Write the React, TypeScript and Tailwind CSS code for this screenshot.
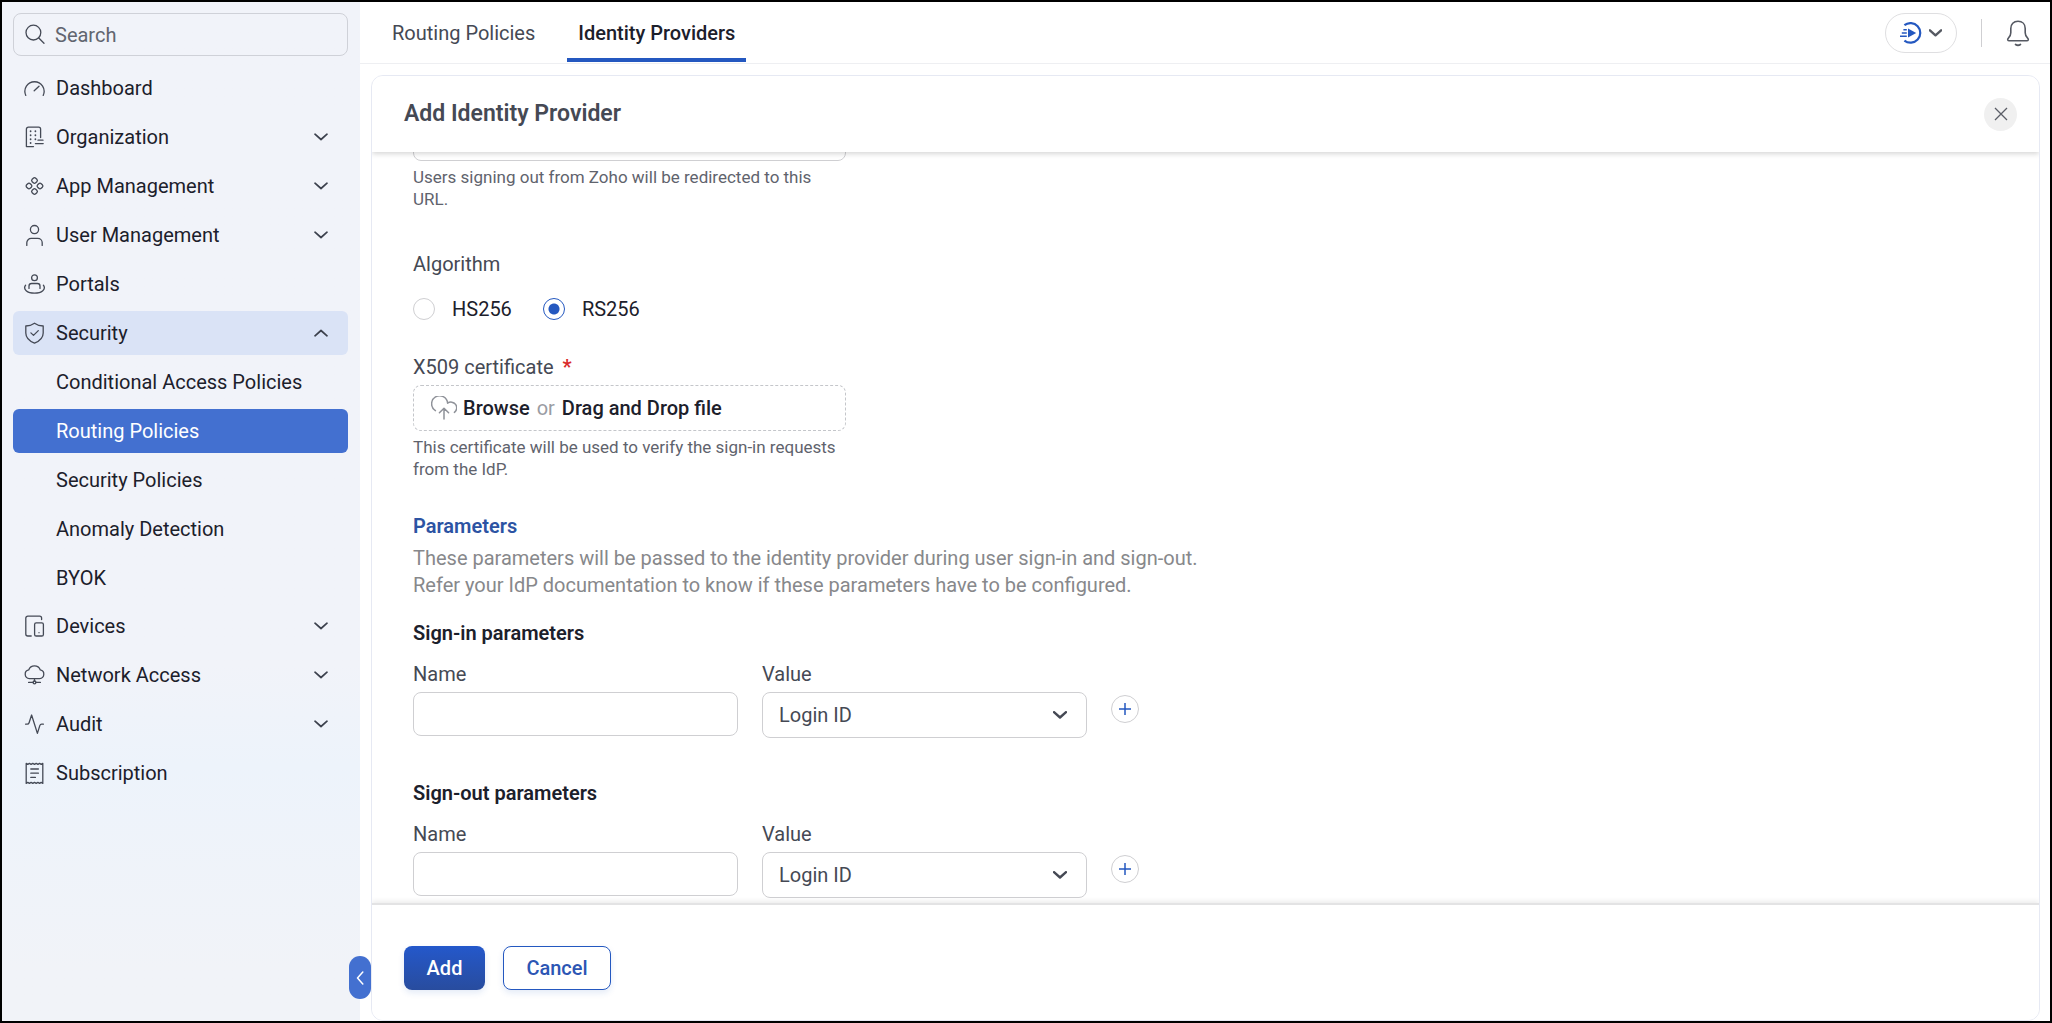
import { useState } from "react"
import type { ReactNode } from "react"

// ---- Icons ----
const Icon = ({ children }: { children: ReactNode }) => (
  <svg
    viewBox="0 0 23 23"
    className="w-[23px] h-[23px] shrink-0"
    fill="none"
    stroke="#454a56"
    strokeWidth="1.3"
    strokeLinecap="round"
    strokeLinejoin="round"
    aria-hidden="true"
  >
    {children}
  </svg>
)

const Chevron = ({ className }: { className: string }) => (
  <svg
    viewBox="0 0 14 8"
    className={className}
    fill="none"
    stroke="currentColor"
    strokeLinecap="round"
    strokeLinejoin="round"
    aria-hidden="true"
  >
    <path d="M1 1.2l6 5.3 6-5.3" />
  </svg>
)

const ICONS = {
  dashboard: (
    <Icon>
      <path d="M2.8 18.4A9.6 9.6 0 1 1 20.2 18.4M11.2 13.8l4.8-4.6" />
    </Icon>
  ),
  organization: (
    <Icon>
      <path d="M10.5 20.6H3.4V3.2a2 2 0 0 1 2-2h10.2a2 2 0 0 1 2 2v8.4M15 14.2h5M12.4 17.6h7.8" />
      <path d="M7.6 5.2v.1M12.4 5.2v.1M7.6 9.2v.1M12.4 9.2v.1M7.6 13.2v.1M12.4 13.2v.1M7.6 17v.1" strokeWidth="1.8" />
    </Icon>
  ),
  apps: (
    <Icon>
      <rect x="9" y="3" width="5" height="5" rx="1.7" transform="rotate(45 11.5 5.5)" />
      <rect x="9" y="14" width="5" height="5" rx="1.7" transform="rotate(45 11.5 16.5)" />
      <rect x="3.5" y="8.5" width="5" height="5" rx="1.7" transform="rotate(45 6 11)" />
      <rect x="14.5" y="8.5" width="5" height="5" rx="1.7" transform="rotate(45 17 11)" />
    </Icon>
  ),
  user: (
    <Icon>
      <circle cx="11.5" cy="5.6" r="4.1" />
      <path d="M3.800 21.400v-2.600a4.400 4.400 0 0 1 4.400-4.400h6.600a4.400 4.400 0 0 1 4.400 4.400v2.600" />
    </Icon>
  ),
  portals: (
    <Icon>
      <circle cx="11.5" cy="4.8" r="2.9" />
      <path d="M6 15.4v-2.3a2.6 2.6 0 0 1 2.6-2.6h5.8a2.6 2.6 0 0 1 2.6 2.6v2.3" />
      <path d="M2.6 12.2c-3 4.2 1.6 8 8.9 8s11.9-3.8 8.9-8" />
    </Icon>
  ),
  shield: (
    <Icon>
      <path d="M11.5 1.2c2.6 1.9 5.4 2.7 8.7 2.8v7c0 4.8-3.4 8-8.7 10.2-5.3-2.2-8.7-5.4-8.7-10.2V4c3.3-.1 6.1-.9 8.7-2.8z" />
      <path d="M7.9 10.9l2.6 2.5 4.8-4.8" />
    </Icon>
  ),
  devices: (
    <Icon>
      <path d="M8.2 21H4.8a2 2 0 0 1-2-2V3.2a2 2 0 0 1 2-2h11.8a2 2 0 0 1 2 2V4.6" />
      <rect x="11.6" y="7.8" width="8.8" height="13.2" rx="1.6" />
      <path d="M16 17.6v.1" />
    </Icon>
  ),
  network: (
    <Icon>
      <path d="M6.4 14.6a4.4 4.4 0 0 1-.7-8.7 6.2 6.2 0 0 1 11.6 0 4.4 4.4 0 0 1-.7 8.7z" />
      <circle cx="11.5" cy="18.4" r="1.4" />
      <path d="M11.5 14.8V17M5.6 18.4h4.5M12.9 18.4h4.5" />
    </Icon>
  ),
  audit: (
    <Icon>
      <path d="M2.6 11.2h1.6c1 0 1.6-.5 1.9-1.4L8.6 2l5.8 18.4 2.4-7.8c.3-.9.9-1.4 1.9-1.4h1.7" />
    </Icon>
  ),
  subscription: (
    <Icon>
      <path d="M3.2 1.4l1.6 1 1.6-1 1.7 1 1.7-1 1.7 1 1.7-1 1.7 1 1.7-1 1.6 1 1.6-1v20l-1.6-1-1.6 1-1.7-1-1.7 1-1.7-1-1.7 1-1.7-1-1.7 1-1.6-1-1.6 1z" />
      <path d="M7.8 7h7.6M7.8 11.2h7.6M7.8 15.4h4.6" />
    </Icon>
  ),
}

const BEFORE = [
  { label: "Dashboard", icon: ICONS.dashboard, expandable: false },
  { label: "Organization", icon: ICONS.organization, expandable: true },
  { label: "App Management", icon: ICONS.apps, expandable: true },
  { label: "User Management", icon: ICONS.user, expandable: true },
  { label: "Portals", icon: ICONS.portals, expandable: false },
]

const SECURITY = [
  "Conditional Access Policies",
  "Routing Policies",
  "Security Policies",
  "Anomaly Detection",
  "BYOK",
]

const AFTER = [
  { label: "Devices", icon: ICONS.devices, expandable: true },
  { label: "Network Access", icon: ICONS.network, expandable: true },
  { label: "Audit", icon: ICONS.audit, expandable: true },
  { label: "Subscription", icon: ICONS.subscription, expandable: false },
]

type NavItemProps = { label: string; icon: ReactNode; expandable: boolean }

const NavItem = ({ label, icon, expandable }: NavItemProps) => (
  <li>
    <a href="#" className="flex items-center h-11 pl-[10px] pr-5 gap-[10px] rounded-md">
      {icon}
      <span className="flex-1">{label}</span>
      {expandable && <Chevron className="w-[14px] h-2 text-[#3c414d] stroke-[1.7]" />}
    </a>
  </li>
)

function Sidebar() {
  return (
    <aside
      className="relative w-[358px] shrink-0 pl-[11px] pr-3 pt-[11px] text-[#1c202b]
        bg-linear-to-b from-[#f1f3f9] from-65% via-[#edf3fb] via-75% to-[#f1f3f8] to-95%"
    >
      <label className="flex items-center h-[43px] pl-[10px] gap-2 border border-[#cfd1d8] rounded-lg">
        <Icon>
          <circle cx="9.4" cy="9.6" r="7.4" />
          <path d="M14.8 15l5.2 5.2" />
        </Icon>
        <input
          type="search"
          aria-label="Search"
          placeholder="Search"
          className="flex-1 min-w-0 bg-transparent outline-none placeholder:text-[#61656f]"
        />
      </label>

      <nav className="mt-[10px]">
        <ul className="flex flex-col gap-[5px]">
          {BEFORE.map((item) => (
            <NavItem key={item.label} {...item} />
          ))}
          <li className="flex flex-col gap-[5px]">
            <a href="#" className="flex items-center h-11 pl-[10px] pr-5 gap-[10px] rounded-md bg-[#dae3f6]">
              {ICONS.shield}
              <span className="flex-1">Security</span>
              <Chevron className="w-[14px] h-2 rotate-180 text-[#3c414d] stroke-[1.7]" />
            </a>
            <ul className="flex flex-col gap-[5px]">
              {SECURITY.map((label) => (
                <li key={label}>
                  <a
                    href="#"
                    className={
                      label === "Routing Policies"
                        ? "flex items-center h-11 pl-[43px] rounded-md bg-[#4370d0] text-white"
                        : "flex items-center h-11 pl-[43px] rounded-md"
                    }
                  >
                    {label}
                  </a>
                </li>
              ))}
            </ul>
          </li>
        </ul>
        <ul className="flex flex-col gap-[5px] mt-1">
          {AFTER.map((item) => (
            <NavItem key={item.label} {...item} />
          ))}
        </ul>
      </nav>

      {/* Collapse handle, sits over the sidebar edge */}
      <button
        type="button"
        aria-label="Collapse sidebar"
        className="absolute -right-[11px] bottom-[22px] w-[22px] h-[43px] rounded-full bg-[#4370d0] text-white flex items-center justify-center"
      >
        <Chevron className="w-[14px] h-2 rotate-90 stroke-[1.5]" />
      </button>
    </aside>
  )
}

function TopBar() {
  return (
    <header className="flex items-stretch justify-between h-[62px] shrink-0 pl-5 pr-5 border-b border-[#eeeff2]">
      <nav className="flex gap-5">
        <a href="#" className="px-3 pt-[17px] text-[#454954]">
          Routing Policies
        </a>
        <a href="#" className="px-[11px] pt-[17px] mb-px font-medium text-[#1c202b] border-b-4 border-[#2458c0]">
          Identity Providers
        </a>
      </nav>

      <div className="flex items-center">
        <button
          type="button"
          aria-label="Quick actions"
          className="flex items-center justify-center gap-[7px] w-[72px] h-10 border border-[#dfdfe1] rounded-full text-[#555962]"
        >
          <svg viewBox="0 0 22 22" className="w-[22px] h-[22px]" fill="none" stroke="#2458c0" aria-hidden="true">
            <path d="M4.4 3.2A9.800 9.800 0 1 1 4.400 18.600" strokeWidth="2.2" />
            <path d="M3.4 7.800h3.400M1.800 11h5M0 14.200h6.800" strokeWidth="1.500" />
            <path d="M8 6.600l8.200 4.500-8.200 4.500z" fill="#2458c0" stroke="none" />
          </svg>
          <Chevron className="w-[13px] h-2 stroke-[2.6]" />
        </button>
        <span className="w-px h-7 mx-6 bg-[#cfcfd2]" />
        <button type="button" aria-label="Notifications">
          <svg
            viewBox="0 0 24 28"
            className="w-6 h-7"
            fill="none"
            stroke="#555962"
            strokeWidth="1.6"
            strokeLinecap="round"
            strokeLinejoin="round"
            aria-hidden="true"
          >
            <path d="M12 2.2c-4.4 0-7.2 3-7.2 7.2v4.4c0 2.6-1 4.2-2.6 5.6-1 .9-.5 2.4 1 2.4h17.6c1.5 0 2-1.5 1-2.4-1.6-1.4-2.6-3-2.6-5.6V9.4c0-4.2-2.8-7.2-7.2-7.2z" />
            <path d="M9.6 25.4c1.4 1 3.4 1 4.8 0" strokeWidth="1.8" />
          </svg>
        </button>
      </div>
    </header>
  )
}

function ParameterRow({ id, title }: { id: string; title: string }) {
  return (
    <fieldset>
      <legend className="font-semibold leading-6 text-[#1c202b]">{title}</legend>
      <div className="flex mt-[17px] gap-6">
        <div className="w-[325px]">
          <label htmlFor={id + "-name"} className="block leading-6">
            Name
          </label>
          <input
            id={id + "-name"}
            type="text"
            className="block w-full h-11 mt-[6px] px-4 border border-[#cfcfd2] rounded-lg bg-white"
          />
        </div>
        <div className="w-[325px]">
          <label htmlFor={id + "-value"} className="block leading-6">
            Value
          </label>
          <div className="relative mt-[6px]">
            <select
              id={id + "-value"}
              className="block w-full h-[46px] pl-4 border border-[#cfcfd2] rounded-lg bg-white appearance-none"
            >
              <option>Login ID</option>
            </select>
            <Chevron className="absolute right-5 top-[19px] w-[14px] h-2 stroke-[2.4] pointer-events-none" />
          </div>
        </div>
        <button
          type="button"
          aria-label={"Add " + title}
          className="flex items-center justify-center self-start w-7 h-7 mt-[33px] border border-[#cfcfd2] rounded-full"
        >
          <svg viewBox="0 0 12 12" className="w-3 h-3" stroke="#2458c0" strokeWidth="1.5" aria-hidden="true">
            <path d="M6 0v12M0 6h12" />
          </svg>
        </button>
      </div>
    </fieldset>
  )
}

export default function App() {
  const [algorithm, setAlgorithm] = useState("RS256")

  return (
    <div
      className="flex h-screen overflow-hidden border-2 border-black bg-white
        font-['Roboto',sans-serif] text-[20px] leading-7 text-[#454954]"
    >
      <Sidebar />

      <main className="flex flex-col flex-1 min-w-0">
        <TopBar />

        <section className="flex flex-col flex-1 min-h-0 mt-[11px] ml-[11px] mr-[10px] border border-[#e6e9f3] rounded-xl overflow-hidden">
          <div className="relative flex items-center justify-between h-[76px] shrink-0 pl-8 pr-[22px] bg-white shadow-[0_2px_5px_rgba(0,0,0,0.16)]">
            <h1 className="text-[23px] font-semibold">Add Identity Provider</h1>
            <button
              type="button"
              aria-label="Close"
              className="flex items-center justify-center w-[33px] h-[33px] rounded-full bg-[#f0f0f0]"
            >
              <svg viewBox="0 0 14 14" className="w-[14px] h-[14px]" stroke="#5a5d66" strokeWidth="1.3" aria-hidden="true">
                <path d="M1 1l12 12M13 1L1 13" />
              </svg>
            </button>
          </div>

          {/* Form */}
          <form className="flex-1 min-h-0 overflow-hidden pl-[41px]">
            <div className="-mt-9 w-[433px]">
              <input
                type="url"
                aria-label="Sign-out URL"
                className="block w-full h-[45px] px-4 border border-[#cfcfd2] rounded-lg bg-white"
              />
              <p className="mt-[5px] text-[17px] leading-[22px] text-[#5f636d]">
                Users signing out from Zoho will be redirected to this URL.
              </p>

              <fieldset className="mt-[42px]">
                <legend className="leading-6">Algorithm</legend>
                <div className="flex gap-[31px] mt-[19px] text-[#1c202b]">
                  {["HS256", "RS256"].map((name) => (
                    <label key={name} className="flex items-center gap-[17px]">
                      <input
                        type="radio"
                        name="algorithm"
                        value={name}
                        checked={algorithm === name}
                        onChange={() => setAlgorithm(name)}
                        className="appearance-none w-[22px] h-[22px] rounded-full border border-[#cfcfd2] bg-white
                          checked:border-[#2458c0] checked:bg-[radial-gradient(circle,#2458c0_5px,white_6px)]"
                      />
                      {name}
                    </label>
                  ))}
                </div>
              </fieldset>

              <label htmlFor="certificate" className="block mt-8 leading-6">
                X509 certificate <span className="ml-1 font-bold text-[#d92b2b]">*</span>
              </label>
              <label
                htmlFor="certificate"
                className="flex items-center h-[46px] mt-[6px] pl-[17px] border border-dashed border-[#c4c6ca] rounded-lg font-medium text-[#1c202b]"
              >
                <svg
                  viewBox="0 0 26 24"
                  className="w-[26px] h-6"
                  fill="none"
                  stroke="#8f9299"
                  strokeWidth="1.5"
                  strokeLinecap="round"
                  strokeLinejoin="round"
                  aria-hidden="true"
                >
                  <path d="M4.4 14.6A8 8 0 1 1 16.6 7.2a5.600 5.600 0 0 1 6.800 9.200" />
                  <path d="M13 23V12.6M8.4 16.8l4.6-4.6 4.6 4.6" />
                </svg>
                <span className="ml-[6px]">Browse</span>
                <span className="mx-[7px] font-normal text-[#9a9ca3]">or</span>
                <span>Drag and Drop file</span>
                <input id="certificate" type="file" className="sr-only" />
              </label>
              <p className="mt-[5px] text-[17px] leading-[22px] text-[#5f636d]">
                This certificate will be used to verify the sign-in requests from the IdP.
              </p>
            </div>

            <h2 className="mt-[34px] font-semibold leading-6 text-[#2c53a3]">Parameters</h2>
            <p className="mt-[7px] leading-[27px] text-[#87888b]">
              These parameters will be passed to the identity provider during user sign-in and sign-out.
              <br />
              Refer your IdP documentation to know if these parameters have to be configured.
            </p>
            <div className="flex flex-col gap-[43px] mt-[22px]">
              <ParameterRow id="sign-in" title="Sign-in parameters" />
              <ParameterRow id="sign-out" title="Sign-out parameters" />
            </div>
          </form>

          <footer className="relative flex items-center gap-[18px] h-[117px] shrink-0 pt-[10px] pl-8 bg-white border-t-2 border-[#e3e3e4] shadow-[0_-2px_5px_rgba(0,0,0,0.08)]">
            <button
              type="button"
              className="w-[81px] h-11 rounded-lg bg-linear-to-b from-[#2458cb] to-[#284c9e] font-medium text-white shadow-[0_3px_6px_rgba(36,88,192,0.12)]"
            >
              Add
            </button>
            <button
              type="button"
              className="w-[108px] h-11 rounded-lg border border-[#2458c0] bg-white font-medium text-[#2c56b4] shadow-[0_3px_6px_rgba(36,88,192,0.12)]"
            >
              Cancel
            </button>
          </footer>
        </section>
      </main>
    </div>
  )
}
